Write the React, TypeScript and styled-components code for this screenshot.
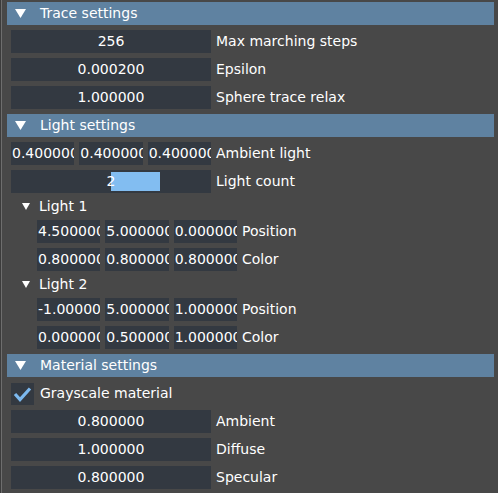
import React from "react";
import styled, { createGlobalStyle } from "styled-components";

const Global = createGlobalStyle`
  html, body { margin: 0; padding: 0; background: #484848; }
  body { font-family: "DejaVu Sans", "Liberation Sans", sans-serif; font-size: 14px; color: #ffffff; }
  #root { width: 498px; height: 493px; overflow: hidden; }
`;

const Frame = styled.div`
  box-sizing: border-box;
  width: 498px;
  height: 493px;
  border-left: 1px solid #3c3c3c;
  box-shadow: inset 1px 0 0 #6e6e6e;
  padding: 2px 4px 0 6px;
  display: flex;
  flex-direction: column;
  gap: 5px;
`;

const Header = styled.div`
  height: 23px;
  background: #5f82a1;
  display: flex;
  align-items: center;
  padding-left: 8px;
  gap: 14px;
  line-height: 23px;
  white-space: nowrap;
`;

const Row = styled.div<{ $indent?: number }>`
  height: 23px;
  display: flex;
  align-items: center;
  gap: 5px;
  padding-left: ${(p) => 4 + (p.$indent ?? 0)}px;
  white-space: nowrap;
`;

const Inputs = styled.div`
  width: 200px;
  height: 23px;
  display: flex;
  gap: 5px;
  flex: none;
`;

const Field = styled.div`
  position: relative;
  flex: 1 1 0;
  min-width: 0;
  height: 23px;
  background: #333941;
  display: flex;
  align-items: center;
  justify-content: safe center;
  overflow: hidden;
  padding: 0 1px;
  line-height: 23px;
`;

const FieldText = styled.span`
  position: relative;
  z-index: 1;
  flex: none;
`;

const Selection = styled.span`
  position: absolute;
  left: 100px;
  top: 2px;
  width: 49px;
  height: 19px;
  background: #82bdf1;
`;

const Label = styled.span`
  line-height: 23px;
`;

const TreeNode = styled.div`
  height: 17px;
  display: flex;
  align-items: center;
  padding-left: 15px;
  gap: 9px;
  line-height: 17px;
`;

const Check = styled.div`
  width: 23px;
  height: 22px;
  background: #333941;
  display: flex;
  align-items: center;
  justify-content: center;
  flex: none;
`;

const CheckRow = styled(Row)`
  gap: 6px;
`;

const Arrow = ({ size }: { size: "big" | "small" }) =>
  size === "big" ? (
    <svg width="11" height="9" viewBox="0 0 11 9">
      <polygon points="0,0 11,0 5.5,9" fill="#ffffff" />
    </svg>
  ) : (
    <svg width="8" height="7" viewBox="0 0 8 7">
      <polygon points="0,0 8,0 4,7" fill="#ffffff" />
    </svg>
  );

const InputRow = ({
  values,
  label,
  indent,
}: {
  values: string[];
  label: string;
  indent?: number;
}) => (
  <Row $indent={indent}>
    <Inputs>
      {values.map((v, i) => (
        <Field key={i}>
          <FieldText>{v}</FieldText>
        </Field>
      ))}
    </Inputs>
    <Label>{label}</Label>
  </Row>
);

const SectionHeader = ({ title }: { title: string }) => (
  <Header>
    <Arrow size="big" />
    <span>{title}</span>
  </Header>
);

const Node = ({ title }: { title: string }) => (
  <TreeNode>
    <Arrow size="small" />
    <span>{title}</span>
  </TreeNode>
);

export default function App() {
  return (
    <>
      <Global />
      <Frame>
        <SectionHeader title="Trace settings" />
        <InputRow values={["256"]} label="Max marching steps" />
        <InputRow values={["0.000200"]} label="Epsilon" />
        <InputRow values={["1.000000"]} label="Sphere trace relax" />

        <SectionHeader title="Light settings" />
        <InputRow values={["0.400000", "0.400000", "0.400000"]} label="Ambient light" />
        <Row>
          <Inputs>
            <Field>
              <Selection />
              <FieldText>2</FieldText>
            </Field>
          </Inputs>
          <Label>Light count</Label>
        </Row>
        <Node title="Light 1" />
        <InputRow indent={26} values={["4.500000", "5.000000", "0.000000"]} label="Position" />
        <InputRow indent={26} values={["0.800000", "0.800000", "0.800000"]} label="Color" />
        <Node title="Light 2" />
        <InputRow indent={26} values={["-1.000000", "5.000000", "1.000000"]} label="Position" />
        <InputRow indent={26} values={["0.000000", "0.500000", "1.000000"]} label="Color" />

        <SectionHeader title="Material settings" />
        <CheckRow>
          <Check>
            <svg width="19" height="16" viewBox="0 0 19 16">
              <polyline
                points="2,8 7,13.5 17,2.5"
                fill="none"
                stroke="#7cb9ef"
                strokeWidth="3.2"
                strokeLinecap="butt"
                strokeLinejoin="miter"
              />
            </svg>
          </Check>
          <Label>Grayscale material</Label>
        </CheckRow>
        <InputRow values={["0.800000"]} label="Ambient" />
        <InputRow values={["1.000000"]} label="Diffuse" />
        <InputRow values={["0.800000"]} label="Specular" />
      </Frame>
    </>
  );
}
